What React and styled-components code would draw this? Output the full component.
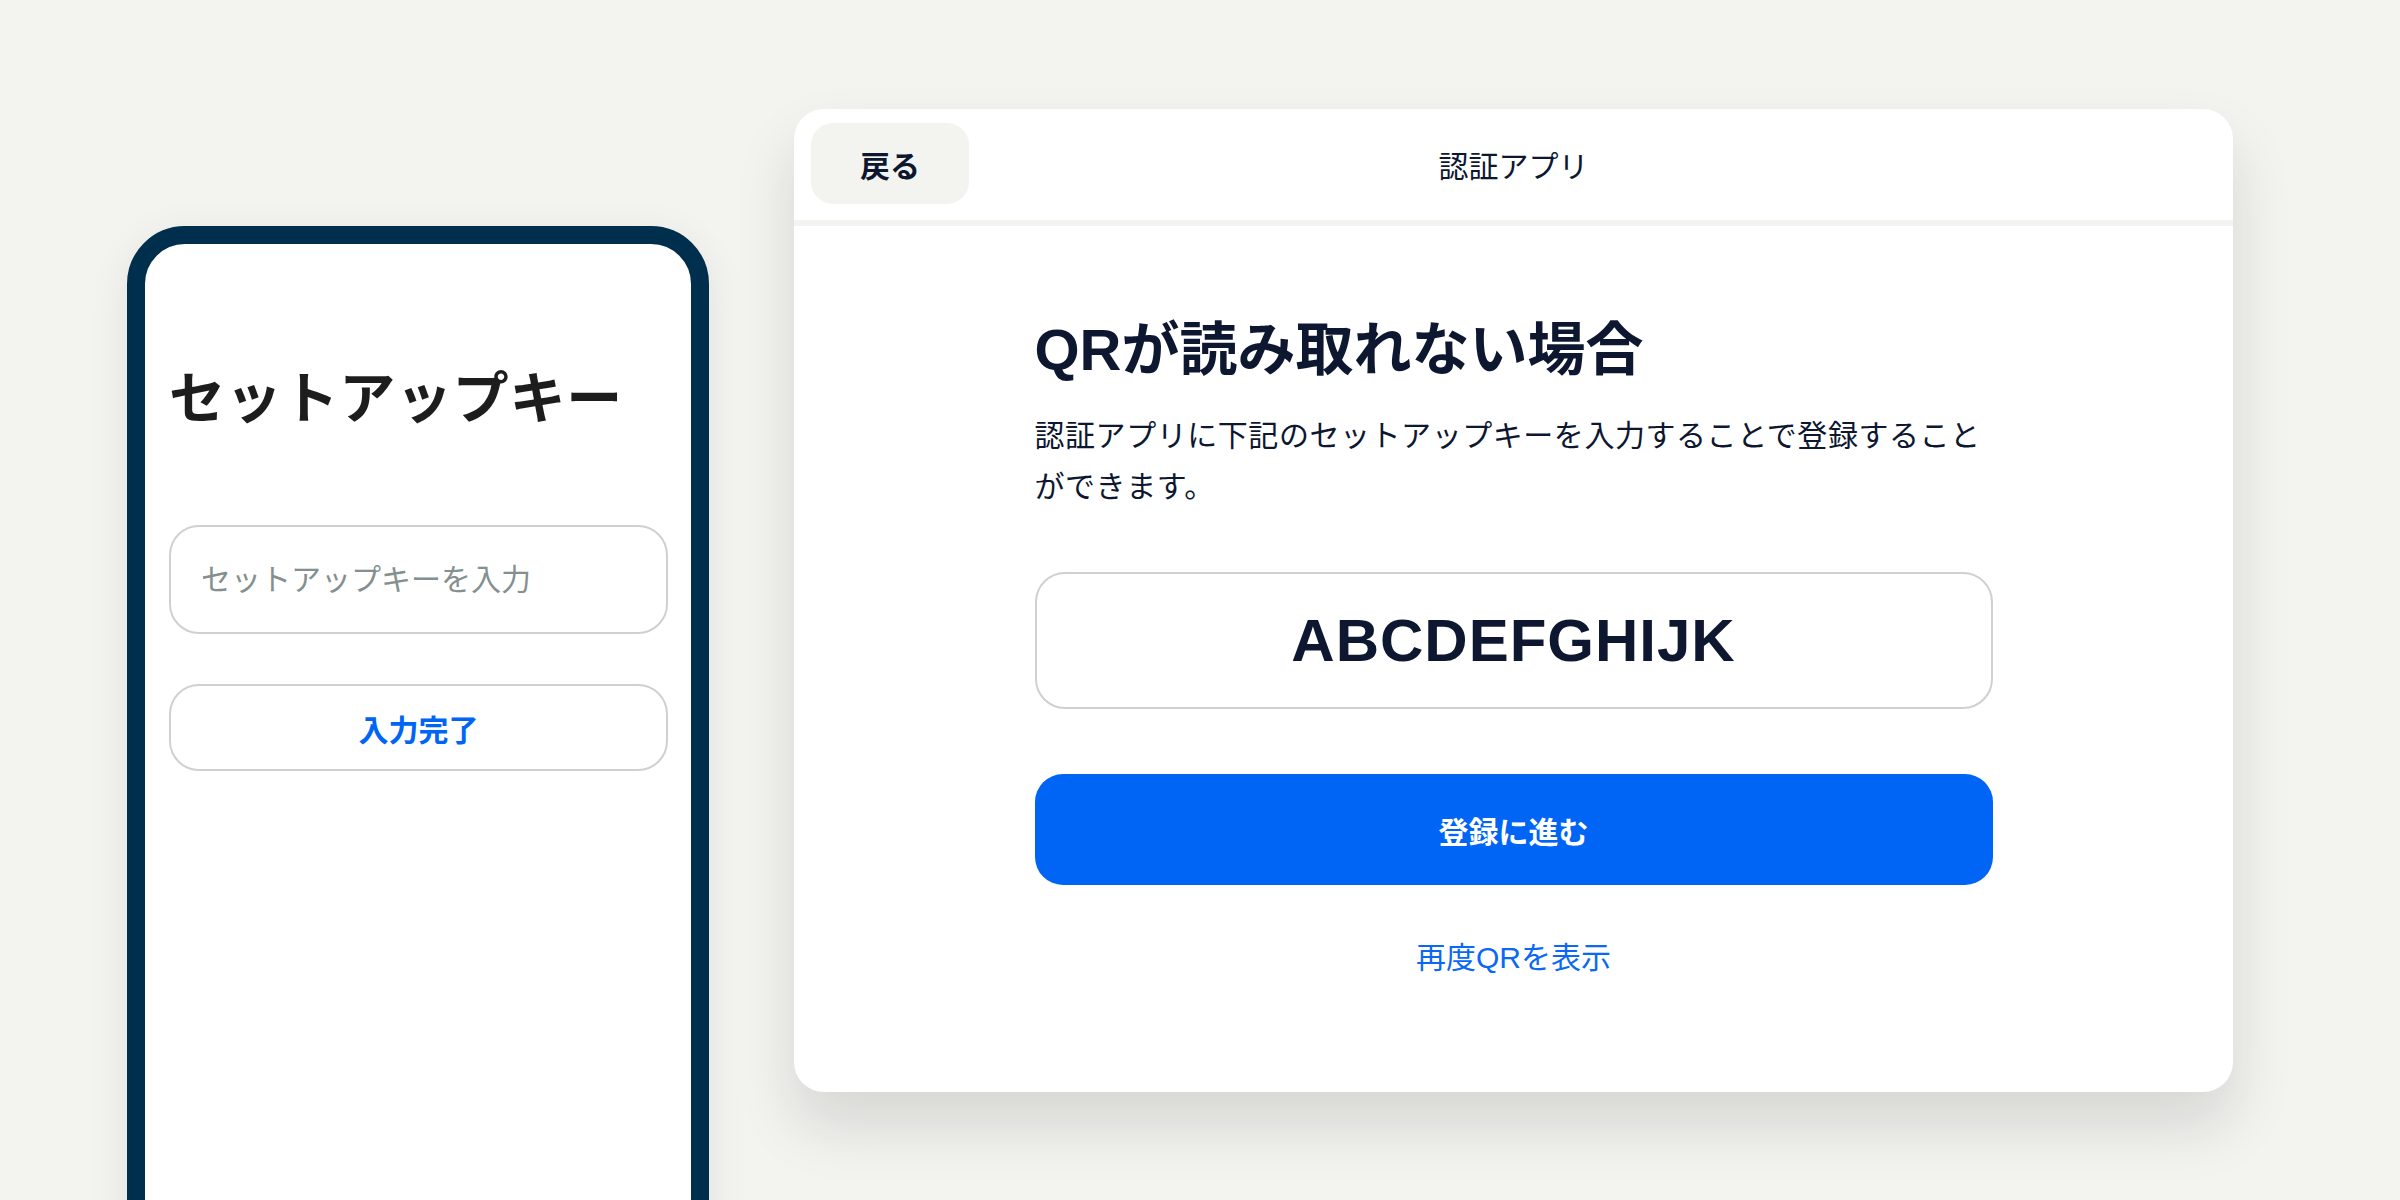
import React from 'react'
import styled, { createGlobalStyle } from 'styled-components'

const GlobalStyle = createGlobalStyle`
  html, body {
    margin: 0;
    padding: 0;
    background: #f3f3ef;
  }
  body {
    font-family: "Liberation Sans", "Noto Sans CJK JP", sans-serif;
    -webkit-font-smoothing: antialiased;
  }
  * {
    box-sizing: border-box;
  }
`

const Stage = styled.main`
  width: 2400px;
  height: 1200px;
  overflow: hidden;
  display: flex;
  align-items: flex-start;
  gap: 85px;
  padding: 109px 0 0 127px;
`

/* ---------- phone mock ---------- */

const Phone = styled.section`
  flex: 0 0 582px;
  height: 1120px;
  margin-top: 117px;
  background: #fff;
  border: 18px solid #002e4d;
  border-radius: 58px;
  padding: 0 23px 0 24px;
  box-shadow: 0 10px 40px rgba(0, 0, 0, 0.08);
  display: flex;
  flex-direction: column;
`

const PhoneTitle = styled.h1`
  margin: 116px 0 0;
  font-size: 56px;
  line-height: 78px;
  font-weight: 700;
  color: #1d1d1d;
  letter-spacing: 0.75px;
`

const KeyInput = styled.input`
  margin-top: 87px;
  height: 109px;
  width: 100%;
  border: 2px solid #cfd1cc;
  border-radius: 30px;
  padding: 0 30px;
  font-family: inherit;
  font-size: 30px;
  color: #1d1d1d;
  background: #fff;
  outline: none;
  &::placeholder {
    color: #84908f;
  }
`

const OutlineButton = styled.button`
  margin-top: 50px;
  height: 87px;
  width: 100%;
  border: 2px solid #cfd1cc;
  border-radius: 30px;
  background: #fff;
  color: #0064f5;
  font-family: inherit;
  font-size: 30px;
  font-weight: 700;
  cursor: pointer;
`

/* ---------- dialog card ---------- */

const Card = styled.section`
  flex: 0 0 1439px;
  height: 983px;
  background: #fff;
  border-radius: 30px;
  box-shadow: 0 34px 60px rgba(20, 30, 30, 0.13);
  overflow: hidden;
  display: flex;
  flex-direction: column;
`

const Header = styled.header`
  display: grid;
  grid-template-columns: 1fr auto 1fr;
  align-items: center;
  padding: 14px 17px 16px;
  border-bottom: 6px solid #f3f3ef;
`

const BackButton = styled.button`
  justify-self: start;
  width: 158px;
  height: 81px;
  border: none;
  border-radius: 22px;
  background: #f3f3ef;
  color: #0d1730;
  font-family: inherit;
  font-size: 30px;
  font-weight: 700;
  cursor: pointer;
`

const HeaderTitle = styled.h2`
  margin: 0;
  font-size: 30px;
  font-weight: 400;
  color: #0d1730;
`

const Body = styled.div`
  width: 958px;
  margin: 0 auto;
  padding-top: 84px;
  display: flex;
  flex-direction: column;
`

const Heading = styled.h1`
  margin: 0;
  font-size: 58px;
  line-height: 80px;
  font-weight: 700;
  letter-spacing: 0;
  color: #0d1730;
`

const Lead = styled.p`
  margin: 20px 0 0;
  font-size: 30px;
  line-height: 51px;
  letter-spacing: 0.55px;
  color: #0d1730;
`

const KeyBox = styled.div`
  margin-top: 60px;
  height: 137px;
  border: 2px solid #cfd1cc;
  border-radius: 30px;
  display: flex;
  align-items: center;
  justify-content: center;
  font-size: 60px;
  font-weight: 700;
  letter-spacing: 1px;
  color: #0d1730;
`

const PrimaryButton = styled.button`
  margin-top: 65px;
  height: 111px;
  width: 100%;
  border: none;
  border-radius: 28px;
  background: #0064f5;
  color: #fff;
  font-family: inherit;
  font-size: 30px;
  font-weight: 700;
  cursor: pointer;
`

const TextLink = styled.a`
  margin-top: 50px;
  align-self: center;
  font-size: 30px;
  line-height: 45px;
  color: #0a68f5;
  text-decoration: none;
  cursor: pointer;
`

const App = () => {
  return (
    <>
      <GlobalStyle />
      <Stage>
        <Phone>
          <PhoneTitle>セットアップキー</PhoneTitle>
          <KeyInput placeholder='セットアップキーを入力' />
          <OutlineButton type='button'>入力完了</OutlineButton>
        </Phone>

        <Card>
          <Header>
            <BackButton type='button'>戻る</BackButton>
            <HeaderTitle>認証アプリ</HeaderTitle>
            <span />
          </Header>
          <Body>
            <Heading>QRが読み取れない場合</Heading>
            <Lead>
              認証アプリに下記のセットアップキーを入力することで登録することができます。
            </Lead>
            <KeyBox>ABCDEFGHIJK</KeyBox>
            <PrimaryButton type='button'>登録に進む</PrimaryButton>
            <TextLink>再度QRを表示</TextLink>
          </Body>
        </Card>
      </Stage>
    </>
  )
}

export default App
